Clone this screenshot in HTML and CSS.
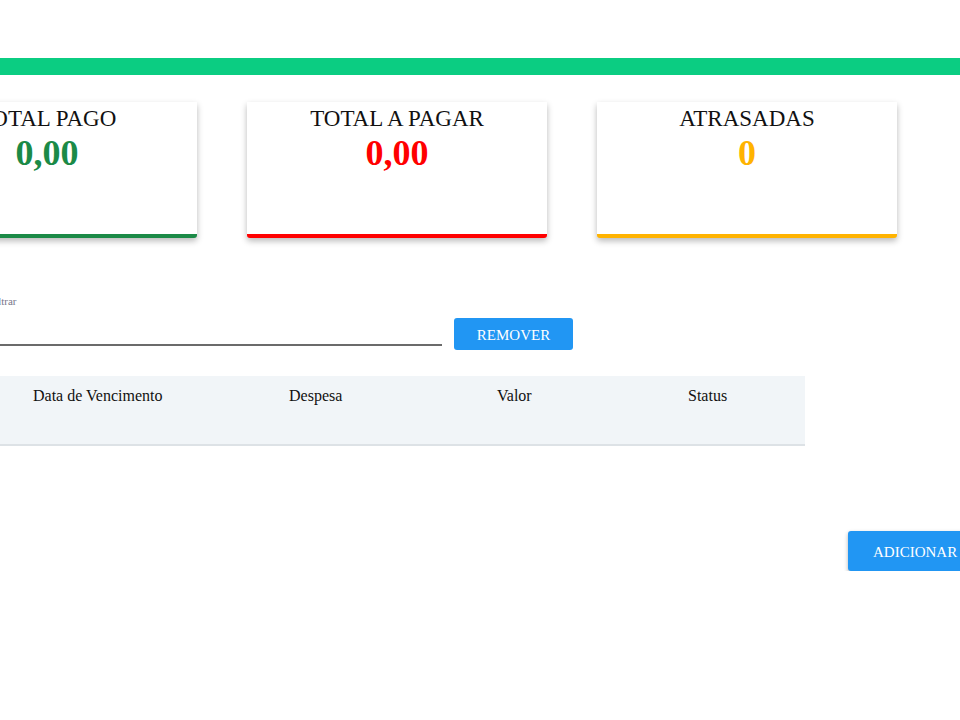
FILE: index.html
```html
<!DOCTYPE html>
<html lang="pt">
<head>
<meta charset="utf-8">
<title>Despesas</title>
<link rel="stylesheet" href="styles.css">
</head>
<body>
<div class="topbar"></div>
<main class="main">
  <section class="cards">
    <div class="card card-green">
      <div class="card-title">TOTAL PAGO</div>
      <div class="card-value">0,00</div>
    </div>
    <div class="card card-red">
      <div class="card-title">TOTAL A PAGAR</div>
      <div class="card-value">0,00</div>
    </div>
    <div class="card card-yellow">
      <div class="card-title">ATRASADAS</div>
      <div class="card-value">0</div>
    </div>
  </section>

  <section class="filter-row">
    <label class="field">
      <span class="field-label">Filtrar</span>
      <input class="field-input" type="text">
    </label>
    <button class="btn btn-remove">REMOVER</button>
  </section>

  <section class="table">
    <div class="thead">
      <div class="th th-select"></div>
      <div class="th">Data de Vencimento</div>
      <div class="th">Despesa</div>
      <div class="th">Valor</div>
      <div class="th">Status</div>
    </div>
  </section>

  <section class="actions">
    <button class="btn btn-add">ADICIONAR</button>
  </section>
</main>
</body>
</html>
```

FILE: styles.css
```css
html, body {
  margin: 0;
  padding: 0;
  background: #ffffff;
  overflow: hidden;
}

body {
  font-family: "Liberation Serif", "Times New Roman", serif;
  color: #111;
}

.topbar {
  margin-top: 58px;
  height: 17px;
  background: #0bcd82;
}

.main {
  margin-left: -103px;
  width: 1000px;
  display: flex;
  flex-direction: column;
}

.cards {
  display: flex;
  gap: 50px;
  margin-top: 27px;
}

.card {
  width: 300px;
  height: 128px;
  background: #fff;
  border-bottom: 4px solid #1b8a47;
  border-radius: 0 0 3px 3px;
  box-shadow: 0 3px 6px rgba(0, 0, 0, 0.28);
  text-align: center;
  padding-top: 4px;
  box-sizing: content-box;
}

.card-title {
  font-size: 23px;
  line-height: 26px;
  color: #111;
}

.card-value {
  font-size: 36px;
  font-weight: bold;
  line-height: 41px;
  margin-top: 1px;
}

.card-green { border-bottom-color: #1b8a47; }
.card-green .card-value { color: #1b8a47; }
.card-red { border-bottom-color: #ff0000; }
.card-red .card-value { color: #ff0000; }
.card-yellow { border-bottom-color: #ffb300; }
.card-yellow .card-value { color: #ffb300; }

.filter-row {
  display: flex;
  align-items: flex-end;
  gap: 12px;
  margin-top: 57px;
}

.field {
  display: flex;
  flex-direction: column;
  width: 545px;
}

.field-label {
  font-size: 11px;
  line-height: 13px;
  color: #77778a;
  padding-left: 92px;
  margin-bottom: 4px;
}

.field-input {
  border: none;
  border-bottom: 2px solid #6b6b6b;
  height: 32px;
  padding: 0;
  outline: none;
  background: transparent;
  font-family: inherit;
}

.btn {
  border: none;
  background: #2196f3;
  color: #fff;
  font-family: "Liberation Serif", "Times New Roman", serif;
  font-size: 15px;
  border-radius: 3px;
  cursor: pointer;
  flex-shrink: 0;
}

.btn-remove {
  width: 119px;
  height: 32px;
  margin-bottom: -4px;
  padding-top: 4px;
}

.table {
  margin-top: 30px;
  width: 908px;
}

.thead {
  display: grid;
  grid-template-columns: 120px 256px 208px 191px 133px;
  height: 68px;
  background: #f1f5f8;
  border-bottom: 2px solid #dde2e6;
  font-size: 16px;
}

.th {
  padding: 11px 0 0 16px;
  line-height: 18px;
}

.actions {
  display: flex;
  margin-top: 85px;
}

.btn-add {
  margin-left: 951px;
  width: 140px;
  height: 40px;
  padding: 2px 0 0 0;
  text-align: left;
  padding-left: 25px;
  box-shadow: 0 2px 4px rgba(0, 0, 0, 0.3);
}
```
